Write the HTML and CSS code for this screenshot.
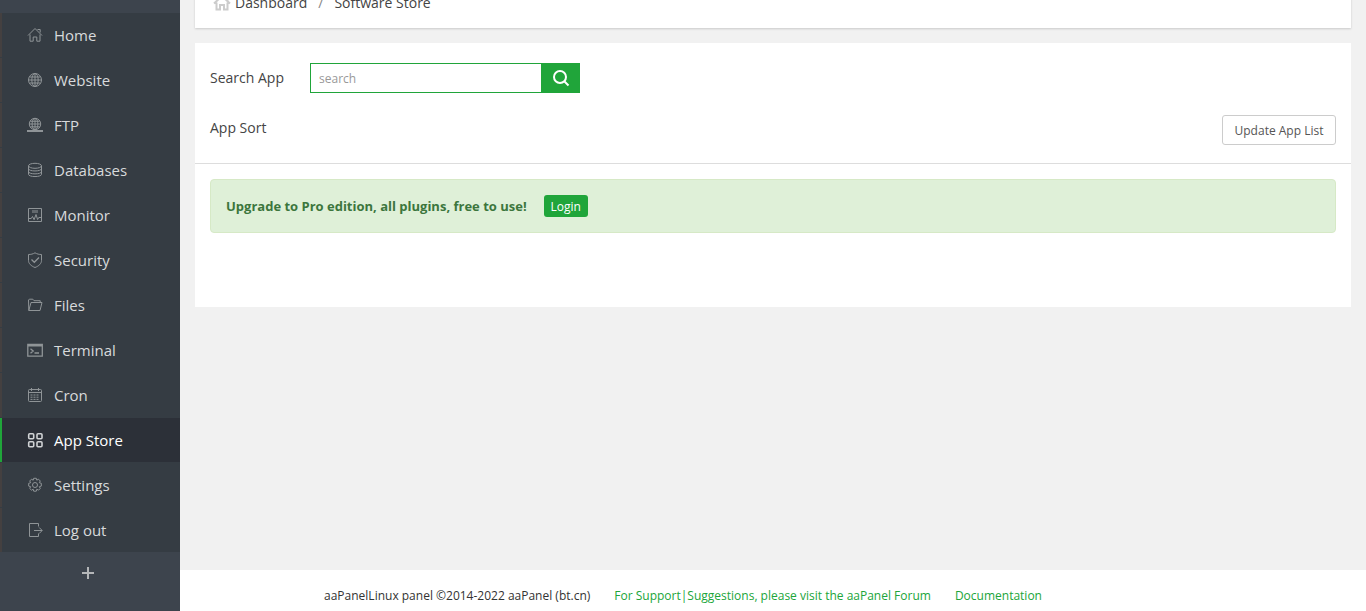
FILE: index.html
```html
<!DOCTYPE html>
<html lang="en">
<head>
    <meta charset="UTF-8">
    <meta name="viewport" content="width=device-width, initial-scale=1.0">
    <title>Software Store</title>
    <link rel="stylesheet" href="styles.css">
</head>
<body>
    <nav class="sidebar">
        <ul class="menu">
            <li><a href="#"><svg viewBox="0 0 16 16"><path d="M1 8.5 8 1.5l7 7M3 7.5v6.7h3.2V10h3.6v4.2H13V7.5M10.5 2.5h2.7v3"/></svg>Home</a></li>
            <li><a href="#"><svg viewBox="0 0 16 16"><circle cx="8" cy="8" r="6.5"/><ellipse cx="8" cy="8" rx="3.2" ry="6.5"/><path d="M8 1.5v13M1.5 8h13M2.5 5h11M2.5 11h11"/></svg>Website</a></li>
            <li><a href="#"><svg viewBox="0 0 16 16"><circle cx="8" cy="7" r="5.7"/><ellipse cx="8" cy="7" rx="2.9" ry="5.7"/><path d="M8 1.3v12M2.3 7h11.4M3.3 4.3h9.4M3.3 9.8h9.4"/><path class="thick" d="M0 14h16M5.5 14h5"/></svg>FTP</a></li>
            <li><a href="#"><svg viewBox="0 0 16 16"><ellipse cx="8" cy="3.8" rx="6.5" ry="2.5"/><path d="M1.5 3.8v8.5c0 3 13 3 13 0V3.8M1.5 6.7c0 3 13 3 13 0M1.5 9.6c0 3 13 3 13 0"/></svg>Databases</a></li>
            <li><a href="#"><svg viewBox="0 0 16 16"><path d="M1.5 1.5h13v13h-13zM2 11.5h2.2l1.3-2 1.6 3.2L9 7.5l1.6 5 1.2-2H14"/><path class="faint" d="M5 4.5h6"/></svg>Monitor</a></li>
            <li><a href="#"><svg viewBox="0 0 16 16"><path d="M8 .8c2.200 1.300 4 1.700 6.500 1.700v6c0 3-2.500 5.500-6.500 7-4-1.500-6.500-4-6.500-7v-6C4 2.500 5.800 2.100 8 .8z"/><path class="check" d="M4.500 7.500l2.800 2.800 4.700-4.800"/></svg>Security</a></li>
            <li><a href="#"><svg viewBox="0 0 16 16"><path d="M1.800 13.500 1.500 3l.8-.8h3.500l1.200 1.500h6.200v1.800M1.800 13.500 4 5.500h11l-2 8z"/></svg>Files</a></li>
            <li><a href="#"><svg viewBox="0 0 16 16"><path class="check" d="M.8 2.500h14.500v11.700H.8z"/><path class="thick" d="M1 3.500h14"/><path class="check" d="M3.500 6.700 6.200 9l-2.700 2.200M7.500 11h4.500"/></svg>Terminal</a></li>
            <li><a href="#"><svg viewBox="0 0 16 16"><rect x="1.500" y="2.500" width="13" height="12" rx="1"/><path d="M1.500 5.500h13M4.500 1v3M11.500 1v3"/><path stroke-dasharray="2 1" d="M3.500 8h9M3.500 10.200h9M3.500 12.400h9"/></svg>Cron</a></li>
            <li class="active"><a href="#"><svg viewBox="0 0 16 16"><rect x="1.700" y="1.700" width="5" height="5" rx="1"/><rect x="10" y="1.700" width="5" height="5" rx="1"/><rect x="1.700" y="9.800" width="5" height="5" rx="1"/><rect x="10" y="9.800" width="5" height="5" rx="1"/></svg>App Store</a></li>
            <li><a href="#"><svg viewBox="0 0 16 16"><circle cx="8" cy="8" r="2.500"/><path d="M6.700 1.300h2.600l.5 1.900 1.700-1 1.800 1.800-1 1.700 2 .6v2.800l-2 .6 1 1.700-1.800 1.800-1.700-1-.5 2H6.700l-.5-2-1.700 1-1.800-1.800 1-1.700-2-.6V6.300l2-.6-1-1.700 1.800-1.800 1.700 1z"/></svg>Settings</a></li>
            <li><a href="#"><svg viewBox="0 0 16 16"><path d="M11.500 4.500v-3h-9v13h9v-3M7 8.500h8M12.200 5.500l3 3-3 3"/></svg>Log out</a></li>
        </ul>
        <button class="add" type="button" aria-label="Add menu item">
            <svg viewBox="0 0 14 14"><path d="M7 1v12M1 7h12"/></svg>
        </button>
    </nav>

    <div class="content">
        <div class="breadcrumb">
            <svg viewBox="0 0 18 18"><path d="M1 9.500 9 2l8 7.500M3.500 8.500v7H7V11h4v4.500h3.500v-7M12 3.500h2.500v3"/></svg>
            <a href="#">Dashboard</a>
            <span class="slash">/</span>
            <span>Software Store</span>
        </div>

        <main class="panel">
            <div class="filters">
                <form class="search">
                    <label for="search">Search App</label>
                    <input type="text" id="search" placeholder="search">
                    <button type="submit" aria-label="Search">
                        <svg viewBox="0 0 18 18"><circle cx="8" cy="8" r="6"/><path d="M12.500 12.500l4 4"/></svg>
                    </button>
                </form>
                <div class="sort">
                    <span>App Sort</span>
                    <button class="update" type="button">Update App List</button>
                </div>
            </div>
            <div class="alert">
                <strong>Upgrade to Pro edition, all plugins, free to use!</strong>
                <button class="login" type="button">Login</button>
            </div>
        </main>

        <footer class="footer">
            <span>aaPanelLinux panel ©2014-2022 aaPanel (bt.cn)</span>
            <a href="#">For Support|Suggestions, please visit the aaPanel Forum</a>
            <a href="#">Documentation</a>
        </footer>
    </div>
</body>
</html>
```

FILE: styles.css
```css
* { box-sizing: border-box; }
body { margin: 0; height: 100vh; display: flex; overflow: hidden; background: #f1f1f1; color: #444; font-family: "Open Sans", "Noto Sans", sans-serif; font-size: 12px; line-height: 20px; }
a { color: inherit; text-decoration: none; }
button, input { font-family: inherit; font-size: 12px; }
svg { fill: none; stroke: currentColor; flex: none; }

.sidebar { width: 180px; flex: none; padding-top: 13px; background: #3d444d; }
.menu { list-style: none; margin: 0; padding: 0; background: #353c43; }
.menu li { height: 44px; margin-bottom: 1px; border-left: 2px solid #444040; }
.menu li:last-child { margin-bottom: 0; }
.menu a { display: flex; align-items: center; gap: 11px; height: 100%; padding-left: 25px; color: #d8dadc; font-size: 15px; }
.menu svg { width: 16px; height: 16px; color: #8f9497; }
.menu .thick { stroke-width: 2; }
.menu .check { stroke-width: 1.3; }
.menu .faint { stroke-width: 3; opacity: 0.5; }
.menu .active { background: #2c3038; border-left-color: #20a53a; }
.menu .active a { color: #fff; }
.menu .active svg { color: #d0d2d4; stroke-width: 1.6; }
.add { display: block; margin: 14px auto; padding: 0 5px 0 0; background: none; border: none; color: #b4b6b8; cursor: pointer; }
.add svg { display: block; width: 14px; height: 14px; stroke-width: 2; }

.content { flex: 1; display: flex; flex-direction: column; }
.breadcrumb { display: flex; align-items: center; height: 50px; margin: -22px 15px 15px; padding-left: 18px; background: #fff; box-shadow: 0 1px 2px rgba(0, 0, 0, 0.16); font-size: 14px; }
.breadcrumb svg { width: 18px; height: 18px; margin-right: 4px; color: #ccc; stroke-width: 2; }
.breadcrumb .slash { margin: 0 11px; color: #888; }

.panel { margin: 0 15px; min-height: 264px; background: #fff; }
.filters { padding: 20px 15px 18px; border-bottom: 1px solid #ddd; font-size: 14px; }
.search { display: flex; align-items: center; }
.search label { width: 100px; }
.search input { width: 231px; height: 30px; padding: 0 8px; border: 1px solid #20a53a; border-right: none; outline: none; }
.search input::placeholder { color: #999; }
.search button { display: flex; align-items: center; justify-content: center; width: 39px; height: 30px; padding: 0; background: #20a53a; border: none; color: #fff; cursor: pointer; }
.search button svg { width: 18px; height: 18px; stroke-width: 2; }
.sort { display: flex; align-items: flex-start; justify-content: space-between; margin-top: 22px; line-height: 26px; }
.update { min-width: 114px; height: 30px; padding: 0 10px; background: #fff; border: 1px solid #ccc; border-radius: 3px; color: #555; cursor: pointer; }
.alert { display: flex; align-items: center; gap: 17px; margin: 15px; padding: 15px; background: #dff0d8; border: 1px solid #d6e9c6; border-radius: 4px; color: #3c763d; font-size: 13px; }
.login { min-width: 44px; height: 22px; padding: 0 6px; background: #20a53a; border: none; border-radius: 3px; color: #fff; cursor: pointer; }

.footer { display: flex; justify-content: center; gap: 24px; margin-top: auto; padding: 16px 180px 5px 0; background: #fff; color: #333; white-space: nowrap; }
.footer a { color: #20a53a; }
```
